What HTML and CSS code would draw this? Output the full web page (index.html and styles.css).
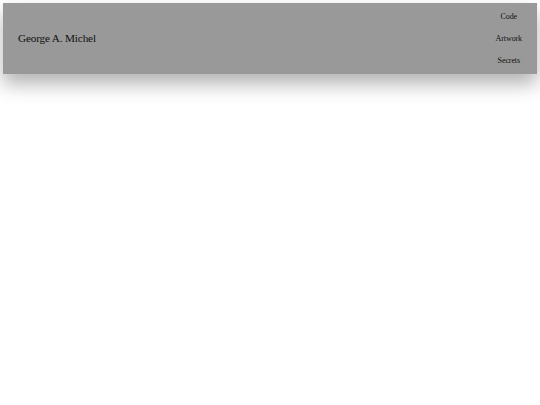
FILE: index.html
```html
<!DOCTYPE html>
<html>
<head>
<meta charset="utf-8">
<link rel="stylesheet" href="styles.css">
</head>
<body>
<header class="bar">
  <div class="name">George A. Michel</div>
  <nav class="nav">
    <a class="nav-link">Code</a>
    <a class="nav-link">Artwork</a>
    <a class="nav-link">Secrets</a>
  </nav>
</header>
</body>
</html>
```
FILE: styles.css
```css
html, body {
  margin: 0;
  background: #fff;
}
body {
  padding: 3px;
  min-height: 100vh;
  box-sizing: border-box;
  font-family: "Liberation Serif", "Times New Roman", serif;
  color: #111;
}
.bar {
  background: #999;
  height: 71px;
  display: flex;
  align-items: center;
  justify-content: space-between;
  padding: 0 15px;
  box-shadow: 0 10px 18px rgba(0,0,0,0.3);
}
.name {
  font-size: 11.2px;
  letter-spacing: -0.15px;
  margin-top: -1px;
}
.nav {
  display: flex;
  flex-direction: column;
  align-items: center;
  gap: 12px;
}
.nav-link {
  font-size: 8px;
  line-height: 10px;
  letter-spacing: -0.1px;
}
```
